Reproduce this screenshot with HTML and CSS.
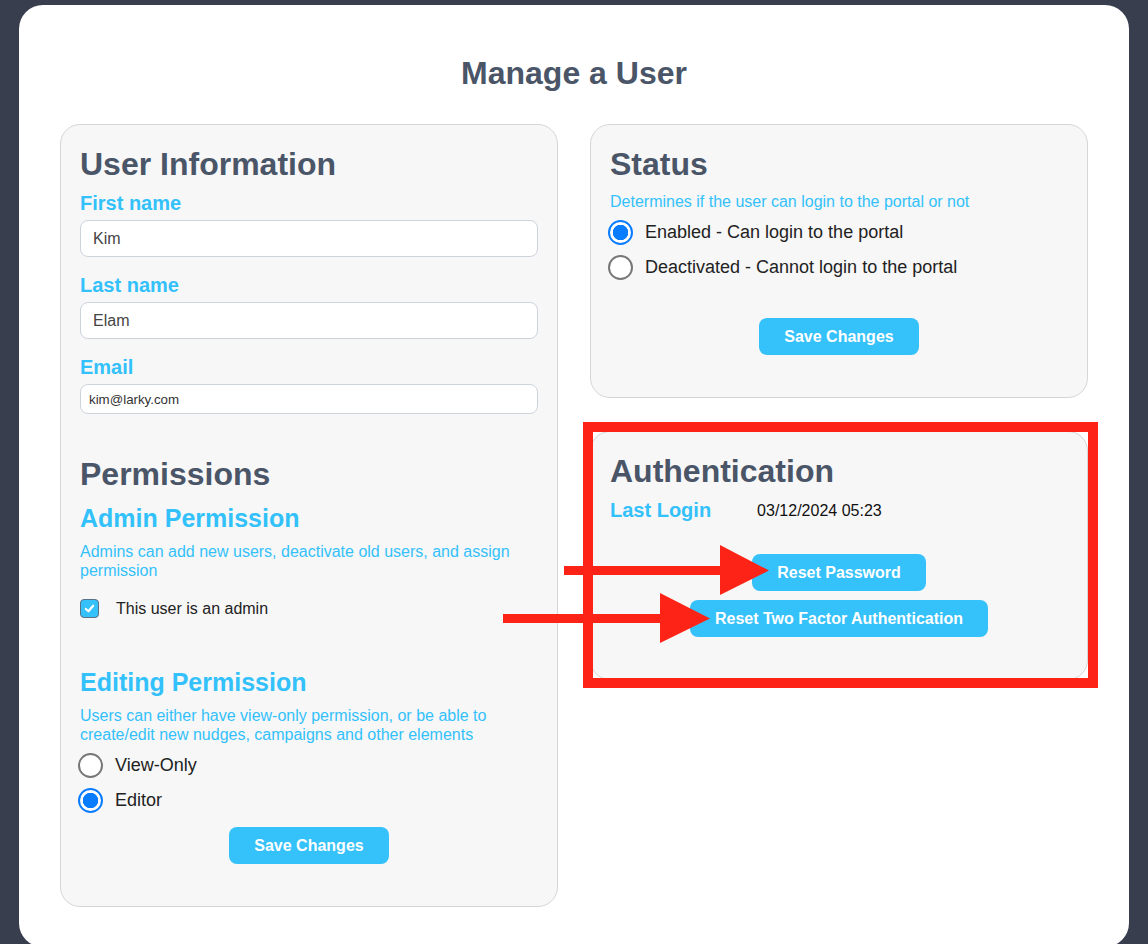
FILE: index.html
```html
<!DOCTYPE html>
<html>
<head>
    <title>Manage a User</title>
    <meta name="viewport" content="width=device-width, initial-scale=1.0">
    <link rel="stylesheet" href="styles.css">
</head>
<body>
    <div class="page-card">
        <h1 class="page-title">Manage a User</h1>
        <div class="columns">
            <div class="panel">
                <h2>User Information</h2>
                <div class="field">
                    <label>First name</label>
                    <input class="text-input" type="text" value="Kim">
                </div>
                <div class="field">
                    <label>Last name</label>
                    <input class="text-input" type="text" value="Elam">
                </div>
                <div class="field">
                    <label>Email</label>
                    <input class="text-input email" type="text" value="kim@larky.com">
                </div>

                <h2 class="section-title">Permissions</h2>
                <h3>Admin Permission</h3>
                <p class="hint">Admins can add new users, deactivate old users, and assign permission</p>
                <div class="check-row">
                    <span class="checkbox checked">
                        <svg width="11" height="11" viewBox="0 0 12 12"><path d="M2 6.5 L4.8 9 L10 3" fill="none" stroke="#fff" stroke-width="2.4" stroke-linecap="round" stroke-linejoin="round"/></svg>
                    </span>
                    <span>This user is an admin</span>
                </div>

                <h3 class="sub-section">Editing Permission</h3>
                <p class="hint">Users can either have view-only permission, or be able to create/edit new nudges, campaigns and other elements</p>
                <div class="radio-group">
                    <div class="radio-row"><span class="radio"></span><span>View-Only</span></div>
                    <div class="radio-row"><span class="radio checked"></span><span>Editor</span></div>
                </div>
                <div class="actions tight">
                    <button class="button">Save Changes</button>
                </div>
            </div>

            <div class="side-column">
                <div class="panel">
                    <h2>Status</h2>
                    <p class="hint">Determines if the user can login to the portal or not</p>
                    <div class="radio-group status">
                        <div class="radio-row"><span class="radio checked"></span><span>Enabled - Can login to the portal</span></div>
                        <div class="radio-row"><span class="radio"></span><span>Deactivated - Cannot login to the portal</span></div>
                    </div>
                    <div class="actions">
                        <button class="button">Save Changes</button>
                    </div>
                </div>

                <div class="panel">
                    <h2>Authentication</h2>
                    <div class="login-row">
                        <span class="login-label">Last Login</span>
                        <span class="login-date">03/12/2024 05:23</span>
                    </div>
                    <div class="actions stacked">
                        <button class="button">Reset Password</button>
                        <button class="button">Reset Two Factor Authentication</button>
                    </div>
                </div>
            </div>
        </div>
    </div>

    <!-- annotation overlay -->
    <div class="highlight-box"></div>
    <svg class="arrows" width="1148" height="944" viewBox="0 0 1148 944">
        <rect x="564" y="566" width="158" height="9" fill="#fd2317"/>
        <polygon points="720,545 769,570.5 720,595" fill="#fd2317"/>
        <rect x="503" y="614" width="159" height="9" fill="#fd2317"/>
        <polygon points="660,593 710,618.5 660,643" fill="#fd2317"/>
    </svg>
</body>
</html>
```

FILE: styles.css
```css
body {
    font-family: "Liberation Sans", Arial, sans-serif;
    background-color: #393e4e;
    color: #222;
    margin: 0;
    padding: 0;
}
.page-card {
    background-color: #fff;
    margin: 5px 19px 0;
    border-radius: 24px;
    padding: 50px 41px 40px;
}
.page-title {
    margin: 0 0 32px;
    text-align: center;
    font-size: 32px;
    line-height: 37px;
    color: #4a5568;
}
.columns {
    display: grid;
    grid-template-columns: 498px 498px;
    gap: 32px;
    align-items: start;
}
.side-column {
    display: flex;
    flex-direction: column;
    gap: 33px;
}
.panel {
    background-color: #f7f7f7;
    border: 1px solid #d6d6d6;
    border-radius: 20px;
    padding: 20px 19px 20px;
}
.panel h2 {
    margin: 1px 0 9px;
    font-size: 32px;
    line-height: 37px;
    color: #4a5568;
}
.panel h2.section-title {
    margin: 42px 0 11px;
}
.panel h3 {
    margin: 0 0 9px;
    font-size: 25px;
    line-height: 29px;
    color: #33c1fb;
}
.panel h3.sub-section {
    margin-top: 48px;
}
.field {
    margin-bottom: 17px;
}
.field label {
    display: block;
    font-size: 20px;
    line-height: 23px;
    font-weight: bold;
    color: #33c1fb;
    margin-bottom: 5px;
}
.text-input {
    display: block;
    box-sizing: border-box;
    width: 100%;
    height: 37px;
    padding: 0 12px;
    border: 1px solid #cdd3dc;
    border-radius: 8px;
    background-color: #fff;
    font-family: inherit;
    font-size: 16px;
    color: #444;
}
.text-input.email {
    height: 30px;
    padding: 0 8px;
    font-size: 13.3px;
    color: #333;
}
.hint {
    margin: 0;
    font-size: 16px;
    line-height: 19px;
    color: #33c1fb;
}
.check-row {
    display: flex;
    align-items: center;
    height: 23px;
    margin-top: 17px;
    font-size: 16px;
    color: #222;
}
.checkbox {
    box-sizing: border-box;
    width: 19px;
    height: 19px;
    margin-right: 17px;
    border: 1px solid #5b7185;
    border-radius: 4px;
    background-color: #35c1fa;
    display: flex;
    align-items: center;
    justify-content: center;
}
.radio-group {
    margin-top: 4px;
}
.radio-row {
    display: flex;
    align-items: center;
    height: 35px;
    font-size: 18px;
    color: #222;
}
.radio {
    box-sizing: border-box;
    width: 25px;
    height: 25px;
    margin-left: -2px;
    margin-right: 12px;
    border: 2px solid #777;
    border-radius: 50%;
    background-color: #fff;
}
.radio.checked {
    border-color: #0a7cff;
    background: radial-gradient(circle, #0a7cff 0 7.5px, #fff 8px);
}
.actions {
    display: flex;
    justify-content: center;
    margin: 33px 0 22px;
}
.actions.tight {
    margin-top: 9px;
}
.actions.stacked {
    flex-direction: column;
    align-items: center;
    gap: 9px;
    margin-top: 32px;
}
.button {
    background-color: #35c1fa;
    color: #fff;
    height: 37px;
    padding: 0 25px;
    border: none;
    border-radius: 8px;
    font-family: inherit;
    font-size: 16px;
    font-weight: bold;
    cursor: pointer;
}
.login-row {
    display: flex;
    align-items: center;
    gap: 46px;
    height: 23px;
    margin-top: 7px;
}
.login-label {
    font-size: 20px;
    font-weight: bold;
    color: #33c1fb;
}
.login-date {
    font-size: 16px;
    color: #111;
}
.highlight-box {
    position: absolute;
    top: 422px;
    left: 583px;
    width: 515px;
    height: 266px;
    box-sizing: border-box;
    border: 10px solid #fd2317;
}
.arrows {
    position: absolute;
    top: 0;
    left: 0;
    pointer-events: none;
}
```
